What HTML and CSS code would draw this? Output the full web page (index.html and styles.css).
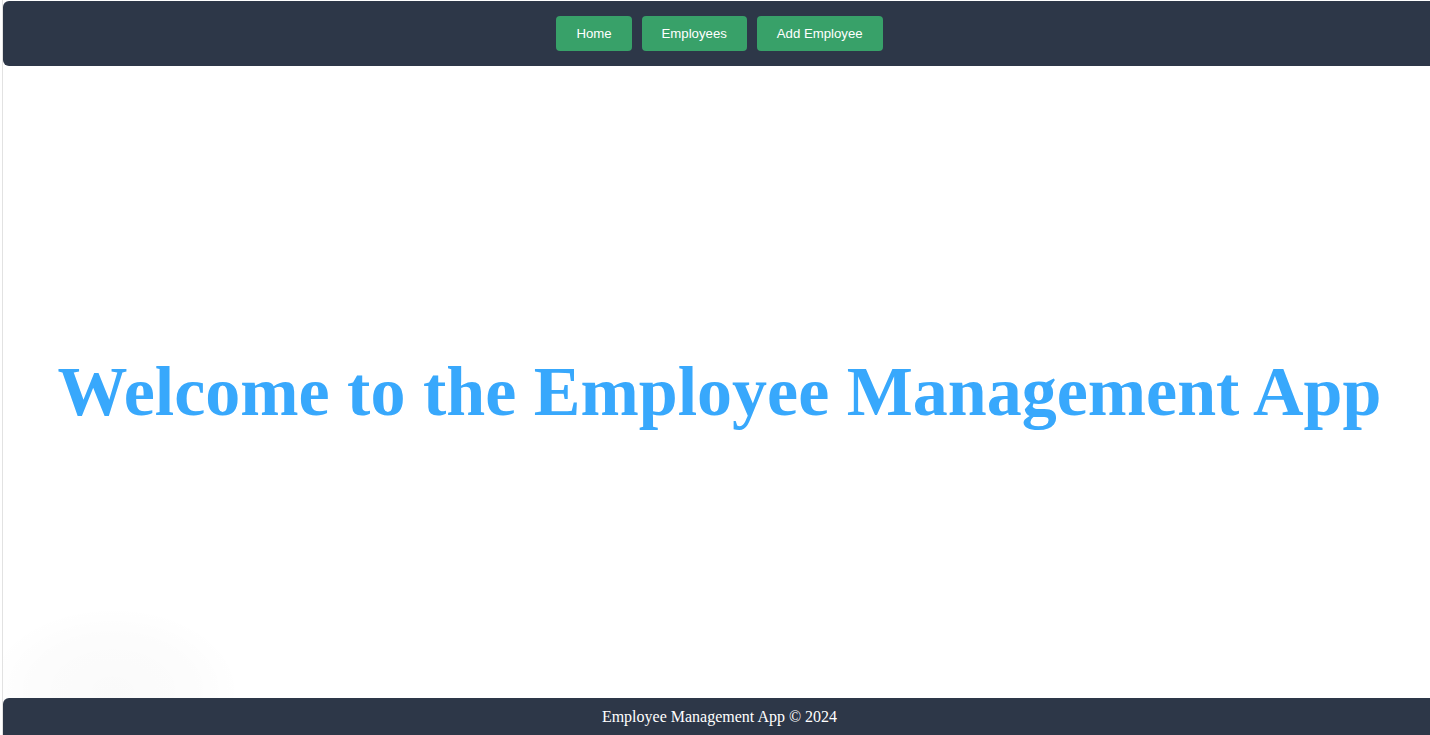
FILE: index.html
```html
<!DOCTYPE html>
<html lang="en">
<head>
<meta charset="utf-8">
<title>Employee Management App</title>
<link rel="stylesheet" href="styles.css">
</head>
<body>
<div class="app">
  <div class="glow"></div>
  <header class="topbar">
    <nav class="nav">
      <a class="nav-btn" href="#">Home</a>
      <a class="nav-btn" href="#">Employees</a>
      <a class="nav-btn" href="#">Add Employee</a>
    </nav>
  </header>
  <main class="main">
    <h1 class="welcome">Welcome to the Employee Management App</h1>
  </main>
  <footer class="footer">Employee Management App © 2024</footer>
</div>
</body>
</html>
```
FILE: styles.css
```css
html, body {
  margin: 0;
  padding: 0;
  height: 100%;
  background: #ffffff;
  overflow: hidden;
}
.app {
  position: relative;
  box-sizing: border-box;
  height: 735px;
  width: 1434px;
  margin-left: 2px;
  padding-top: 1px;
  border-left: 1px solid #e2e2e2;
  display: flex;
  flex-direction: column;
  overflow: hidden;
}
.topbar {
  position: relative;
  z-index: 1;
  box-sizing: border-box;
  height: 65px;
  padding-top: 15px;
  background: #2d3748;
  border-radius: 6px;
  display: flex;
  align-items: flex-start;
  justify-content: center;
}
.nav {
  display: flex;
  gap: 10px;
}
.nav-btn {
  display: block;
  height: 35px;
  line-height: 35px;
  padding: 0 20px;
  background: #38a169;
  color: #ffffff;
  border-radius: 4px;
  text-decoration: none;
  font-family: "Liberation Sans", Arial, sans-serif;
  font-size: 13.2px;
  font-weight: normal;
}
.main {
  flex: 1;
  display: flex;
  align-items: center;
  justify-content: center;
  position: relative;
  z-index: 1;
}
.welcome {
  margin: 0;
  white-space: nowrap;
  font-family: "Liberation Serif", "Times New Roman", serif;
  font-weight: bold;
  font-size: 70px;
  color: #38a8fc;
  text-align: center;
  position: relative;
  top: 10px;
}
.footer {
  position: relative;
  z-index: 1;
  height: 37px;
  background: #2d3748;
  border-radius: 6px 0 0 0;
  color: #ffffff;
  font-family: "Liberation Serif", "Times New Roman", serif;
  font-size: 16px;
  display: flex;
  align-items: center;
  justify-content: center;
  padding-top: 1px;
  box-sizing: border-box;
}
.glow {
  position: absolute;
  left: -20px;
  bottom: -40px;
  width: 260px;
  height: 170px;
  background: radial-gradient(ellipse at center, rgba(0,0,0,0.02) 0%, rgba(0,0,0,0.012) 45%, rgba(0,0,0,0) 70%);
  z-index: 0;
}
```
